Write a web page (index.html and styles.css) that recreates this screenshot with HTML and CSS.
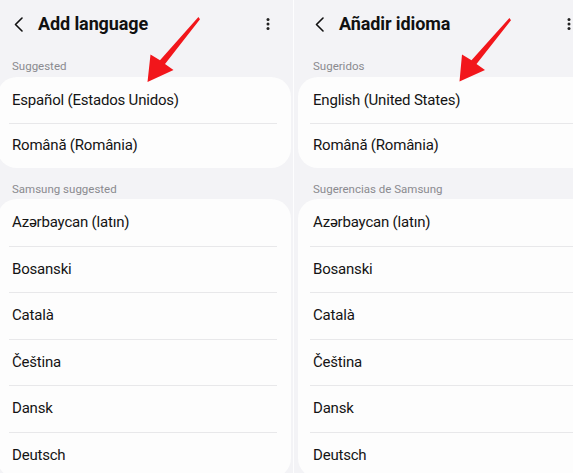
FILE: index.html
```html
<!DOCTYPE html>
<html lang="en">
<head>
<meta charset="utf-8">
<title>Add language</title>
<link rel="stylesheet" href="styles.css">
</head>
<body>
<div class="page">
  <div class="shot shot-left">
    <div class="screen screen-left">
      <div class="appbar">
        <svg class="back" width="9" height="15" viewBox="0 0 9 15"><path d="M8 1 L1.5 7.5 L8 14" fill="none" stroke="#111" stroke-width="1.6" stroke-linecap="round" stroke-linejoin="round"/></svg>
        <h1 class="title">Add language</h1>
        <svg class="more" width="4" height="12" viewBox="0 0 4 12"><circle cx="2" cy="1.6" r="1.5" fill="#222"/><circle cx="2" cy="6" r="1.5" fill="#222"/><circle cx="2" cy="10.4" r="1.5" fill="#222"/></svg>
      </div>
      <div class="section-title first">Suggested</div>
      <div class="card card-short">
        <div class="row">Español (Estados Unidos)</div>
        <div class="row">Română (România)</div>
      </div>
      <div class="section-title">Samsung suggested</div>
      <div class="card">
        <div class="row">Azərbaycan (latın)</div>
        <div class="row">Bosanski</div>
        <div class="row">Català</div>
        <div class="row">Čeština</div>
        <div class="row">Dansk</div>
        <div class="row">Deutsch</div>
      </div>
    </div>
  </div>
  <div class="divider"></div>
  <div class="shot shot-right">
    <div class="screen screen-right">
      <div class="appbar">
        <svg class="back" width="9" height="15" viewBox="0 0 9 15"><path d="M8 1 L1.5 7.5 L8 14" fill="none" stroke="#111" stroke-width="1.6" stroke-linecap="round" stroke-linejoin="round"/></svg>
        <h1 class="title">Añadir idioma</h1>
        <svg class="more" width="4" height="12" viewBox="0 0 4 12"><circle cx="2" cy="1.6" r="1.5" fill="#222"/><circle cx="2" cy="6" r="1.5" fill="#222"/><circle cx="2" cy="10.4" r="1.5" fill="#222"/></svg>
      </div>
      <div class="section-title first">Sugeridos</div>
      <div class="card card-short">
        <div class="row">English (United States)</div>
        <div class="row">Română (România)</div>
      </div>
      <div class="section-title">Sugerencias de Samsung</div>
      <div class="card">
        <div class="row">Azərbaycan (latın)</div>
        <div class="row">Bosanski</div>
        <div class="row">Català</div>
        <div class="row">Čeština</div>
        <div class="row">Dansk</div>
        <div class="row">Deutsch</div>
      </div>
    </div>
  </div>
  <svg class="arrows" width="573" height="473" viewBox="0 0 573 473">
    <polygon fill="#f2161b" points="198.4,17 160,60.3 150.5,54.5 147.5,82 173.5,70 165,64 200,19.2"/>
    <polygon fill="#f2161b" points="509.4,18 471.5,60.3 462,54.5 459.5,81.5 485,70 476.5,64 511,20.2"/>
  </svg>
</div>
</body>
</html>
```

FILE: styles.css
```css
* { box-sizing: border-box; }

html, body {
  margin: 0;
  padding: 0;
}

body {
  width: 573px;
  height: 473px;
  overflow: hidden;
  background: #f3f3f6;
  font-family: Roboto, "Noto Sans", "Liberation Sans", sans-serif;
  color: #111;
}

.page {
  position: relative;
  display: flex;
  width: 573px;
  height: 473px;
  overflow: hidden;
}

.shot {
  height: 473px;
  overflow: hidden;
  background: #f3f3f6;
}

.shot-left {
  width: 293px;
  flex: none;
}

.shot-right {
  flex: 1;
}

.divider {
  width: 1px;
  flex: none;
  background: #fdfdfe;
}

.screen {
  width: 308px;
}

.screen-left { margin-left: -10px; }
.screen-right { margin-left: -3px; }

.appbar {
  display: flex;
  align-items: center;
  height: 45px;
  padding: 12px 28px 9px 24px;
}

.back {
  flex: none;
  display: block;
}

.title {
  margin: 0 0 0 15px;
  font-size: 18px;
  font-weight: 700;
  line-height: 24px;
  letter-spacing: -0.1px;
  color: #111;
}

.more {
  flex: none;
  display: block;
  margin-left: auto;
  margin-top: -1px;
}

.section-title {
  padding: 14px 0 3px 22px;
  font-size: 11.5px;
  line-height: 14px;
  color: #8a8a8f;
}

.section-title.first {
  padding-bottom: 4px;
}

.card {
  margin: 0 7px;
  background: #fdfdfd;
  border-radius: 20px;
  overflow: hidden;
}

.row {
  position: relative;
  height: 46.5px;
  display: flex;
  align-items: center;
  padding-left: 15px;
  font-size: 15px;
  letter-spacing: -0.2px;
  color: #141414;
}

.card-short .row {
  height: 45.5px;
}

.row + .row::before {
  content: "";
  position: absolute;
  top: 0;
  left: 12px;
  right: 14px;
  height: 1px;
  background: #e8e8ea;
}

.arrows {
  position: absolute;
  left: 0;
  top: 0;
  pointer-events: none;
}
```
